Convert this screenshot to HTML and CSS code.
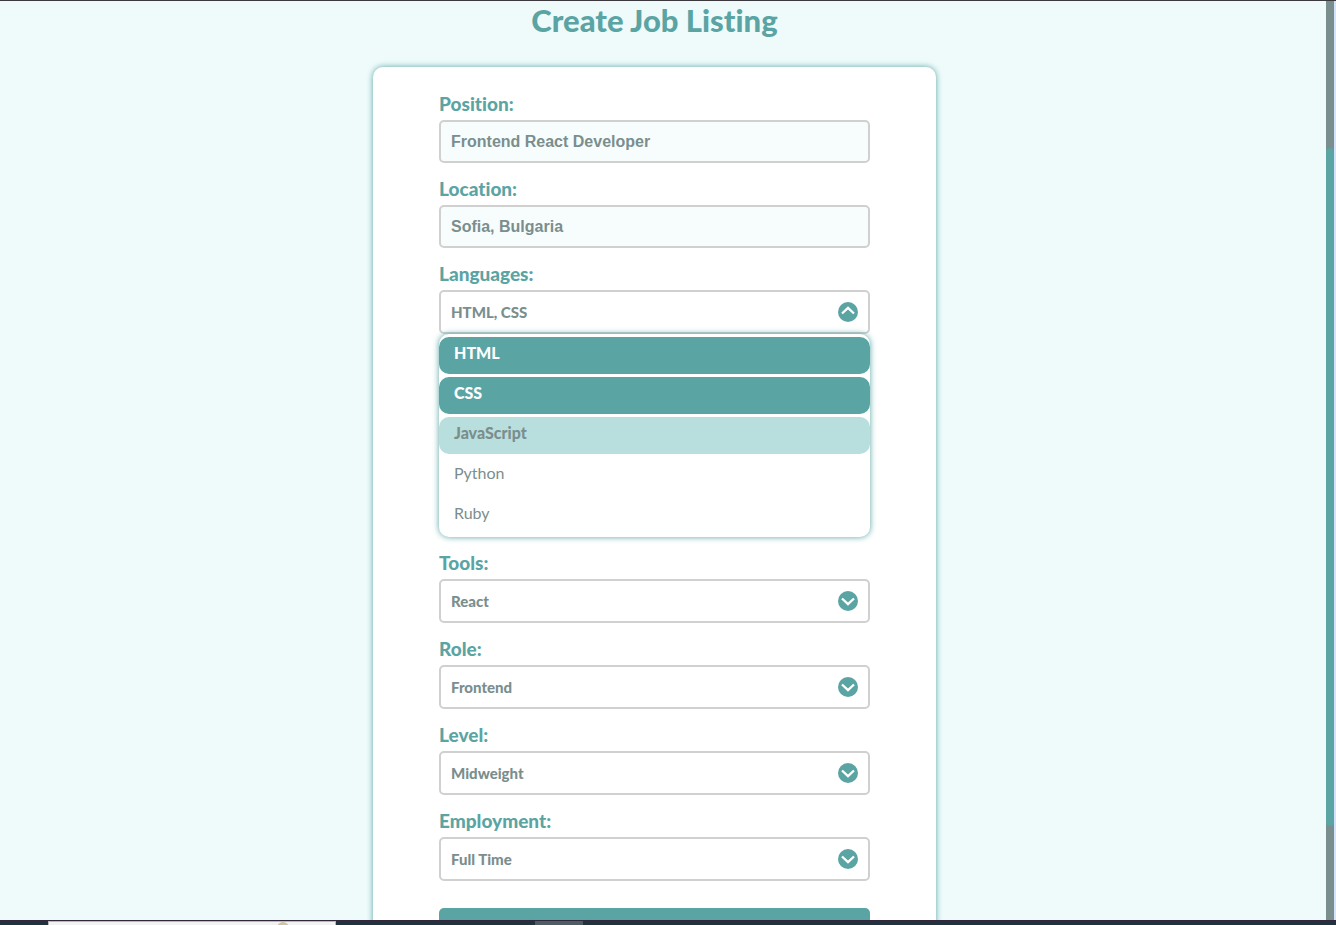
FILE: index.html
```html
<!DOCTYPE html>
<html lang="en">
<head>
<meta charset="utf-8">
<meta name="viewport" content="width=device-width, initial-scale=1">
<title>Create Job Listing</title>
<link rel="stylesheet" href="styles.css">
</head>
<body>
<div class="window">
  <main class="page">
    <h1 class="title">Create Job Listing</h1>
    <form class="card">
      <label class="label" for="position">Position:</label>
      <input class="field" id="position" type="text" value="Frontend React Developer">

      <label class="label" for="location">Location:</label>
      <input class="field" id="location" type="text" value="Sofia, Bulgaria">

      <label class="label" for="languages">Languages:</label>
      <button class="picker" id="languages" type="button" aria-haspopup="listbox" aria-expanded="true">
        <span>HTML, CSS</span>
        <svg class="chevron" viewBox="0 0 20 20" aria-hidden="true"><circle cx="10" cy="10" r="10"/><path d="M4 11.500 10 5.800l6 5.700"/></svg>
      </button>
      <ul class="options" role="listbox" aria-multiselectable="true" aria-label="Languages">
        <li class="option option-selected" role="option" aria-selected="true">HTML</li>
        <li class="option option-selected" role="option" aria-selected="true">CSS</li>
        <li class="option option-hover" role="option" aria-selected="false">JavaScript</li>
        <li class="option" role="option" aria-selected="false">Python</li>
        <li class="option" role="option" aria-selected="false">Ruby</li>
      </ul>

      <label class="label" for="tools">Tools:</label>
      <div class="select-wrap">
        <select class="picker" id="tools"><option>React</option></select>
        <svg class="chevron" viewBox="0 0 20 20" aria-hidden="true"><circle cx="10" cy="10" r="10"/><path d="M4 7.500 10 13.200l6-5.700"/></svg>
      </div>

      <label class="label" for="role">Role:</label>
      <div class="select-wrap">
        <select class="picker" id="role"><option>Frontend</option></select>
        <svg class="chevron" viewBox="0 0 20 20" aria-hidden="true"><circle cx="10" cy="10" r="10"/><path d="M4 7.500 10 13.200l6-5.700"/></svg>
      </div>

      <label class="label" for="level">Level:</label>
      <div class="select-wrap">
        <select class="picker" id="level"><option>Midweight</option></select>
        <svg class="chevron" viewBox="0 0 20 20" aria-hidden="true"><circle cx="10" cy="10" r="10"/><path d="M4 7.500 10 13.200l6-5.700"/></svg>
      </div>

      <label class="label" for="employment">Employment:</label>
      <div class="select-wrap">
        <select class="picker" id="employment"><option>Full Time</option></select>
        <svg class="chevron" viewBox="0 0 20 20" aria-hidden="true"><circle cx="10" cy="10" r="10"/><path d="M4 7.500 10 13.200l6-5.700"/></svg>
      </div>

      <button class="submit" type="submit" aria-label="Create"></button>
    </form>
  </main>
  <div class="scrollbar"><div class="thumb"></div></div>
</div>
<footer class="taskbar">
  <div class="search"><span class="search-badge"></span></div>
  <div class="active-app"></div>
</footer>
</body>
</html>
```
FILE: styles.css
```css
* { box-sizing: border-box; }

body {
  margin: 0;
  height: 100vh;
  display: flex;
  flex-direction: column;
  overflow: hidden;
  background: #effbfb;
  color: #7b8e8e;
  font-family: Lato, sans-serif;
  font-size: 16px;
  font-variant-ligatures: none;
}

.window {
  flex: 1;
  min-height: 0;
  display: flex;
  border-top: 1px solid #3b393d;
}

.page {
  flex: 1;
  padding-right: 17px;
  overflow: hidden;
}

.title {
  margin: 0 0 28px;
  color: #5ba4a4;
  font-size: 31px;
  font-weight: 900;
  line-height: 38px;
  text-align: center;
}

.card {
  display: flex;
  flex-direction: column;
  width: 100%;
  max-width: 563px;
  margin: 0 auto;
  padding: 11px 66px 40px;
  border-radius: 10px;
  background: #fff;
  box-shadow: 0 0 6px #5ba4a4;
}

.label {
  margin-top: 14px;
  color: #5ba4a4;
  font-size: 19px;
  font-weight: 900;
  line-height: 23px;
  padding-bottom: 5px;
}

.field,
.picker {
  width: 100%;
  padding: 0 10px;
  border: 2px solid #d0d0d0;
  border-radius: 5px;
  outline: none;
  color: #7b8e8e;
}

.field {
  height: 43px;
  background: #f7fdfd;
  font: bold 16px "Liberation Sans", Arial, sans-serif;
}

.picker {
  display: flex;
  align-items: center;
  justify-content: space-between;
  height: 44px;
  background: #fff;
  font: 900 15px Lato, sans-serif;
  font-variant-ligatures: none;
  text-align: left;
  appearance: none;
}

.select-wrap {
  display: grid;
  align-items: center;
}

.select-wrap > * { grid-area: 1 / 1; }

.select-wrap .chevron {
  justify-self: end;
  margin-right: 12px;
  pointer-events: none;
}

.chevron {
  width: 20px;
  height: 20px;
  fill: #5ba4a4;
}

.chevron path {
  fill: none;
  stroke: #fff;
  stroke-width: 2.3;
}

.options {
  display: flex;
  flex-direction: column;
  gap: 3px;
  margin: 0;
  padding: 3px 0;
  border-radius: 10px;
  background: #fff;
  box-shadow: 0 0 6px #5ba4a4;
  list-style: none;
}

.option {
  height: 37px;
  padding: 0 15px;
  border-radius: 10px;
  line-height: 32px;
}

.option-selected {
  background: #5ba4a4;
  color: #fff;
  font-weight: 900;
}

.option-hover {
  background: #b8dfde;
  font-weight: 900;
}

.submit {
  height: 44px;
  margin-top: 27px;
  border: 0;
  border-radius: 5px;
  background: #5ba4a4;
}

.scrollbar {
  display: flex;
  flex-direction: column;
  width: 10px;
  padding: 147px 0 94px;
  border-right: 2px solid #d5e2fb;
  background: #7b8e8e;
}

.thumb {
  flex: 1;
  border-radius: 4px;
  background: #5ba4a4;
}

.taskbar {
  display: flex;
  height: 5px;
  padding-left: 48px;
  border-top: 1px solid #32273a;
  background: #20333f;
}

.search {
  width: 288px;
  padding-left: 228px;
  overflow: hidden;
  border: 1px solid #b9b9b9;
  border-bottom: 0;
  background: #f2f2f2;
}

.search-badge {
  display: block;
  width: 12px;
  height: 12px;
  border-radius: 50%;
  background: #cdc3a5;
}

.active-app {
  width: 48px;
  margin-left: 199px;
  background: #4e5c65;
}
```
